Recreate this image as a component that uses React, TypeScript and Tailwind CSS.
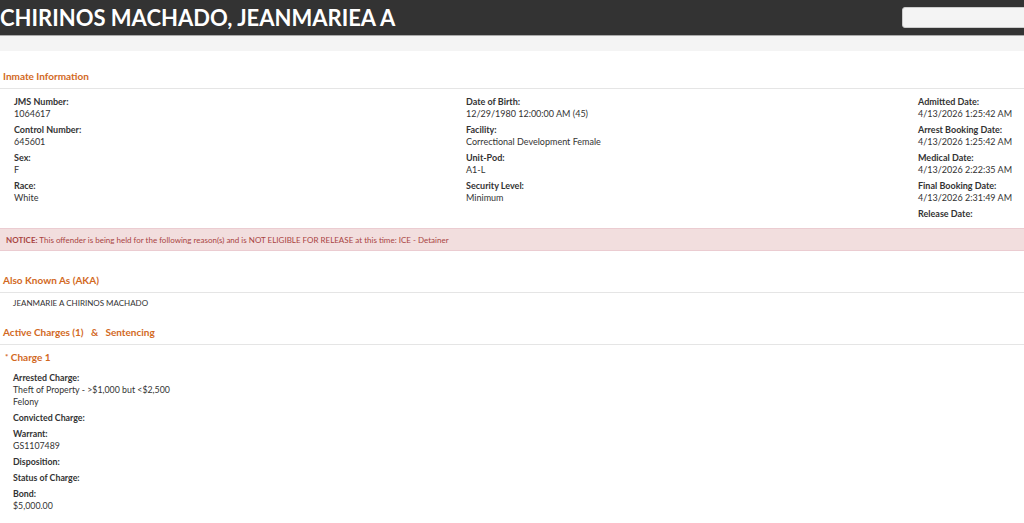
import React from 'react';

const orange = 'text-[#d2691e]';

interface Field {
  label: string;
  values?: string[];
}

const col1: Field[] = [
  { label: 'JMS Number:', values: ['1064617'] },
  { label: 'Control Number:', values: ['645601'] },
  { label: 'Sex:', values: ['F'] },
  { label: 'Race:', values: ['White'] },
];

const col2: Field[] = [
  { label: 'Date of Birth:', values: ['12/29/1980 12:00:00 AM (45)'] },
  { label: 'Facility:', values: ['Correctional Development Female'] },
  { label: 'Unit-Pod:', values: ['A1-L'] },
  { label: 'Security Level:', values: ['Minimum'] },
];

const col3: Field[] = [
  { label: 'Admitted Date:', values: ['4/13/2026 1:25:42 AM'] },
  { label: 'Arrest Booking Date:', values: ['4/13/2026 1:25:42 AM'] },
  { label: 'Medical Date:', values: ['4/13/2026 2:22:35 AM'] },
  { label: 'Final Booking Date:', values: ['4/13/2026 2:31:49 AM'] },
  { label: 'Release Date:' },
];

const charge: Field[] = [
  { label: 'Arrested Charge:', values: ['Theft of Property - >$1,000 but <$2,500', 'Felony'] },
  { label: 'Convicted Charge:' },
  { label: 'Warrant:', values: ['GS1107489'] },
  { label: 'Disposition:' },
  { label: 'Status of Charge:' },
  { label: 'Bond:', values: ['$5,000.00'] },
];

const FieldBlock = ({ field }: { field: Field }) => (
  <div className="mb-[4px]">
    <div className="font-bold leading-[12px]">{field.label}</div>
    {field.values?.map((v) => (
      <div key={v} className="leading-[12px]">{v}</div>
    ))}
  </div>
);

const SectionHeading = ({ children }: { children: React.ReactNode }) => (
  <div className={`px-[3px] pb-[5px] border-b border-[#e5e5e5] font-bold text-[10px] leading-[14px] whitespace-pre ${orange}`}>
    {children}
  </div>
);

export default function App() {
  return (
    <div className="w-[1024px] h-[523px] overflow-hidden bg-white text-[#333] text-[9px]" style={{ fontFamily: 'Lato, "Open Sans", sans-serif' }}>
      <div className="h-[36px] bg-[#333333] flex items-center justify-between border-b border-[#aaa]">
        <h1 className="text-white text-[22px] font-bold leading-none whitespace-nowrap">CHIRINOS MACHADO, JEANMARIEA A</h1>
        <div className="w-[130px] h-[21px] -mr-[8px] bg-[#f4f4f4] rounded-[3px] border border-[#ccc]" />
      </div>
      <div className="h-[15px] bg-[#f4f4f4]" />

      <div className="pt-[18px]">
        <SectionHeading>Inmate Information</SectionHeading>
        <div className="flex pl-[14px] pt-[7px]">
          <div className="w-[452px]">
            {col1.map((f) => <FieldBlock key={f.label} field={f} />)}
          </div>
          <div className="w-[452px]">
            {col2.map((f) => <FieldBlock key={f.label} field={f} />)}
          </div>
          <div className="flex-1">
            {col3.map((f) => <FieldBlock key={f.label} field={f} />)}
          </div>
        </div>

        <div className="mt-[4px] h-[23px] bg-[#f2dede] border-y border-[#ebccd1] text-[#a94442] text-[8px] flex items-center px-[6px]">
          <span><b>NOTICE:</b> This offender is being held for the following reason(s) and is NOT ELIGIBLE FOR RELEASE at this time: ICE - Detainer</span>
        </div>

        <div className="pt-[22px]">
          <SectionHeading>Also Known As (AKA)</SectionHeading>
          <div className="pl-[13px] pt-[4px] leading-[12px] text-[8px]">JEANMARIE A CHIRINOS MACHADO</div>
        </div>

        <div className="pt-[16px]">
          <SectionHeading>{'Active Charges (1)   &   Sentencing'}</SectionHeading>
          <div className={`px-[5px] pt-[5px] text-[10px] font-bold leading-[14px] ${orange}`}>
            <span className="text-[8px] relative -top-[1px]">*</span> Charge 1
          </div>
          <div className="pl-[13px] pt-[7px] text-[8.8px]">
            {charge.map((f) => <FieldBlock key={f.label} field={f} />)}
          </div>
        </div>
      </div>
    </div>
  );
}
